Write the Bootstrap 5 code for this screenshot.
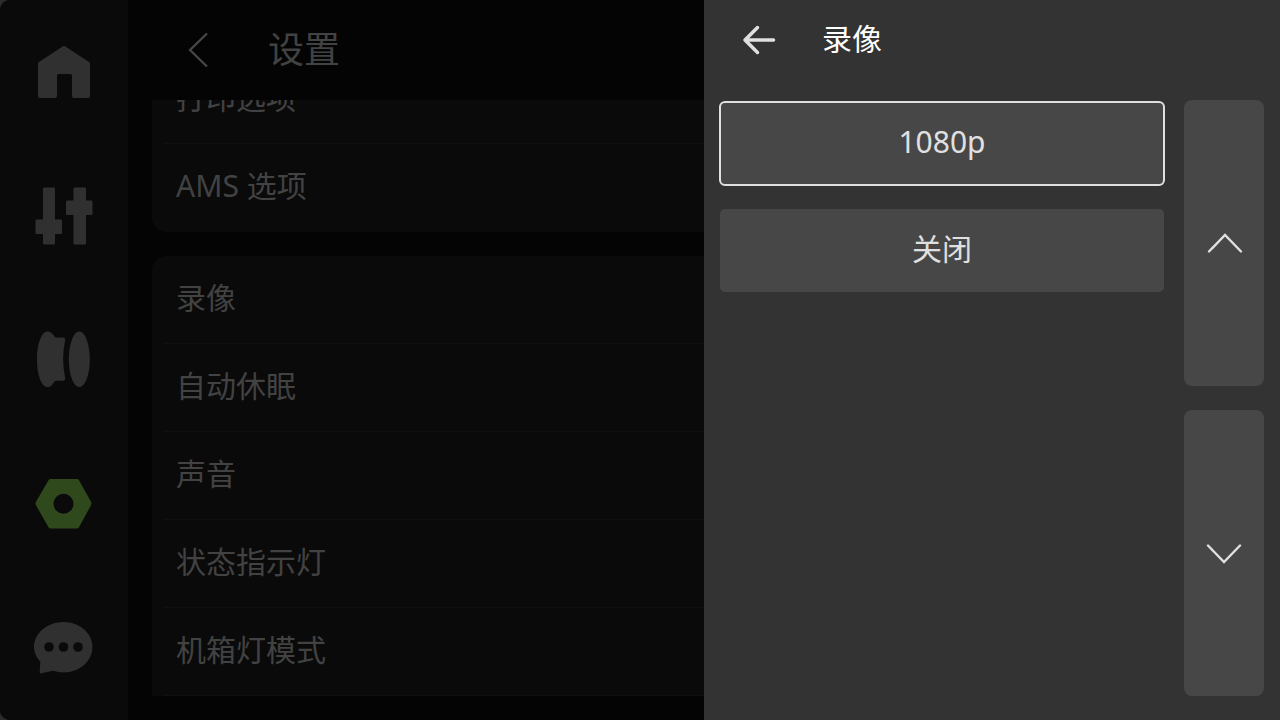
<!DOCTYPE html>
<html lang="zh-CN" data-bs-theme="dark">
<head>
<meta charset="utf-8">
<meta name="viewport" content="width=device-width, initial-scale=1">
<title>设置</title>
<link href="https://cdn.jsdelivr.net/npm/bootstrap@5.3.0/dist/css/bootstrap.min.css" rel="stylesheet">
<style>
  body { background: #2c2c2c; color: #424242; font-family: "Noto Sans", "Noto Sans CJK SC", sans-serif; font-size: 30px; line-height: 40px; }
  .screen { background: #040404; border-radius: 10px 0 0 10px; }
  .side-rail { width: 128px; background: #0a0a0a; color: #303030; }
  .side-rail .nav-link { color: inherit; }
  .side-rail .nav-link.active { color: #30491c; }
  .side-rail svg { display: block; }
  .page-head { height: 100px; padding: 0 48px; gap: 48px; }
  .page-head h1 { font-size: 36px; line-height: 48px; color: #424242; }
  .setting-card { background: #0a0a0a; border-radius: 14px; }
  .setting-card.cut { border-radius: 14px 14px 0 0; }
  .setting-row { height: 88px; margin-left: 12px; padding: 0 12px 4px; color: #424242; border-bottom: 1px solid #101010; }
  .setting-card:not(.cut) .setting-row:last-child { border-bottom-color: transparent; }
  .drawer { width: 45%; background: #333; color: #fff; }
  .drawer-head { height: 80px; padding: 0 36px; gap: 44px; }
  .drawer-head h2 { font-size: 30px; line-height: 40px; padding-bottom: 2px; color: #fff; }
  .drawer-body { padding: 20px 16px 24px; gap: 20px; }
  .option-list { padding-top: 2px; }
  .option-btn, .scroll-btn { background: #474747; color: #e0e0e0; border: 0; }
  .option-btn { height: 83px; border-radius: 5px; padding: 0 0 4px; }
  .option-btn.selected { outline: 2px solid #e0e0e0; outline-offset: -1px; }
  .scroll-btn { width: 80px; border-radius: 8px; }
</style>
</head>
<body>
<div class="screen d-flex vh-100 overflow-hidden">
  <nav class="side-rail nav flex-column flex-nowrap flex-shrink-0" aria-label="主导航">
    <a class="nav-link p-0 flex-fill d-flex align-items-center justify-content-center" href="#" aria-label="主页">
      <svg width="64" height="64" viewBox="0 0 64 64" fill="currentColor"><path d="M31 6.300Q32 5.500 33 6.300L57 22Q58 22.700 58 24V56Q58 58 56 58H42Q40 58 40 56V35.500Q40 34 38.500 34H26.500Q25 34 25 35.500V56Q25 58 23 58H8Q6 58 6 56V24Q6 22.700 7 22Z"/></svg>
    </a>
    <a class="nav-link p-0 flex-fill d-flex align-items-center justify-content-center" href="#" aria-label="控制">
      <svg width="64" height="64" viewBox="0 0 64 64" fill="currentColor"><rect x="11" y="3.500" width="12" height="57" rx="1.300"/><rect x="3.500" y="35.500" width="26.500" height="14.500" rx="1.300"/><rect x="41.500" y="3.500" width="12.500" height="57" rx="1.300"/><rect x="34" y="16.500" width="26.500" height="14.500" rx="1.300"/></svg>
    </a>
    <a class="nav-link p-0 flex-fill d-flex align-items-center justify-content-center" href="#" aria-label="耗材">
      <svg width="64" height="64" viewBox="0 0 64 64" fill="currentColor"><path d="M15.500 3.500C18.500 3.500 20.500 5.500 22.500 8.500Q23 9.500 24.500 9.500H30.500C33 9.500 33.500 11 33 13C30.500 25 30.500 37 33 49C33.500 51.500 33 52.800 30.500 52.800H24.500Q23 52.800 22 54C20.500 57 18.500 59 15.500 59C9.500 59 5 47 5 31.500S9.500 3.500 15.500 3.500Z"/><ellipse cx="47.300" cy="31.300" rx="10.500" ry="27.800"/></svg>
    </a>
    <a class="nav-link active p-0 flex-fill d-flex align-items-center justify-content-center" href="#" aria-label="设置" aria-current="page">
      <svg width="64" height="64" viewBox="0 0 64 64" fill="currentColor" fill-rule="evenodd"><path d="M18.500 7H45Q46.300 7 47 8.200L59 29.800Q60 31.600 59 33.300L47 55.300Q46.300 56.500 45 56.500H18.500Q17.200 56.500 16.500 55.300L4 33.300Q3 31.600 4 29.800L16.500 8.200Q17.200 7 18.500 7ZM31.500 21.700A10 10 0 1 0 31.500 41.700A10 10 0 1 0 31.500 21.700Z"/></svg>
    </a>
    <a class="nav-link p-0 flex-fill d-flex align-items-center justify-content-center" href="#" aria-label="消息">
      <svg width="64" height="64" viewBox="0 0 64 64" fill="currentColor"><path d="M31.500 6C47.500 6 60.500 17 60.500 31S47.500 56.500 31.500 56.500Q26 56.500 21 54.700L8.500 57.500Q7.500 57.500 7.700 56.500L8.300 45.500C4.500 41.500 2 36.500 2 31C2 17 15.500 6 31.500 6Z"/><g fill="#0a0a0a"><circle cx="17" cy="31" r="4.800"/><circle cx="31.500" cy="31" r="4.800"/><circle cx="46" cy="31" r="4.800"/></g></svg>
    </a>
  </nav>

  <main class="d-flex flex-column flex-fill">
    <header class="page-head d-flex align-items-center flex-shrink-0">
      <button class="btn p-0 border-0" type="button" aria-label="返回">
        <svg class="d-block" width="44" height="44" viewBox="0 0 44 44" fill="none" stroke="#484848" stroke-width="2.200"><path d="M31 5.500L14 22L31 38.500"/></svg>
      </button>
      <h1 class="m-0 fw-normal">设置</h1>
    </header>
    <!-- the list is scrolled: the first card runs out under the header -->
    <div class="d-flex flex-column justify-content-end flex-fill overflow-hidden gap-4 mx-4 mb-4">
      <div class="setting-card flex-shrink-0">
        <a class="setting-row d-flex align-items-center text-decoration-none" href="#">打印选项</a>
        <a class="setting-row d-flex align-items-center text-decoration-none" href="#">AMS 选项</a>
      </div>
      <div class="setting-card cut flex-shrink-0">
        <a class="setting-row d-flex align-items-center text-decoration-none" href="#">录像</a>
        <a class="setting-row d-flex align-items-center text-decoration-none" href="#">自动休眠</a>
        <a class="setting-row d-flex align-items-center text-decoration-none" href="#">声音</a>
        <a class="setting-row d-flex align-items-center text-decoration-none" href="#">状态指示灯</a>
        <a class="setting-row d-flex align-items-center text-decoration-none" href="#">机箱灯模式</a>
      </div>
    </div>
  </main>
</div>

<aside class="drawer position-fixed top-0 bottom-0 end-0 d-flex flex-column" aria-label="录像">
  <header class="drawer-head d-flex align-items-center flex-shrink-0">
    <button class="btn p-0 border-0" type="button" aria-label="返回">
      <svg class="d-block" width="38" height="38" viewBox="0 0 38 38" fill="none" stroke="#e0e0e0" stroke-width="3.500" stroke-linecap="round" stroke-linejoin="round"><path d="M17.500 6.500L5 19L17.500 31.500M5 19H33.500"/></svg>
    </button>
    <h2 class="m-0 fw-normal">录像</h2>
  </header>
  <div class="drawer-body d-flex flex-fill">
    <div class="option-list d-flex flex-column gap-4 flex-fill">
      <button class="option-btn selected" type="button" aria-pressed="true">1080p</button>
      <button class="option-btn" type="button" aria-pressed="false">关闭</button>
    </div>
    <div class="d-flex flex-column gap-4">
      <button class="scroll-btn flex-fill d-flex align-items-center justify-content-center p-0" type="button" aria-label="向上">
        <svg width="40" height="40" viewBox="0 0 40 40" fill="none" stroke="currentColor" stroke-width="2.400" stroke-linecap="round"><path d="M5 28.500L21 12L37 28.500"/></svg>
      </button>
      <button class="scroll-btn flex-fill d-flex align-items-center justify-content-center p-0" type="button" aria-label="向下">
        <svg width="40" height="40" viewBox="0 0 40 40" fill="none" stroke="currentColor" stroke-width="2.400" stroke-linecap="round"><path d="M4 12.500L20 29L36 12.500"/></svg>
      </button>
    </div>
  </div>
</aside>
<script src="https://cdn.jsdelivr.net/npm/bootstrap@5.3.0/dist/js/bootstrap.bundle.min.js"></script>
</body>
</html>
